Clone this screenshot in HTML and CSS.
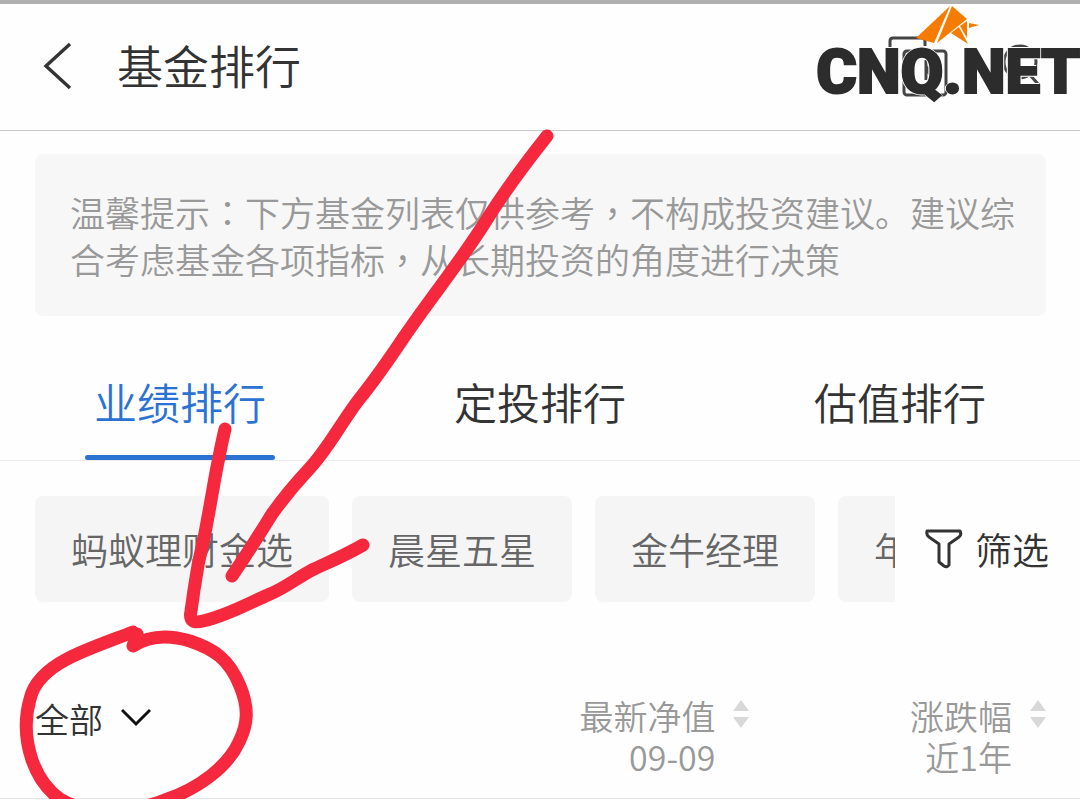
FILE: index.html
```
<!DOCTYPE html>
<html lang="zh-CN">
<head>
    <meta charset="UTF-8">
    <meta name="viewport" content="width=device-width, initial-scale=1.0">
    <title>基金排行</title>
    <link rel="stylesheet" href="styles.css">
</head>
<body>
    <header class="header">
        <a class="back" href="#" aria-label="返回">
            <svg width="30" height="48" viewBox="0 0 30 48"><path d="M27 2 L3 24 L27 46" fill="none" stroke="#333" stroke-width="3.4"/></svg>
        </a>
        <h1>基金排行</h1>
        <div class="actions">
            <button type="button" aria-label="收藏">
                <svg width="60" height="64" viewBox="0 0 60 64" fill="none" stroke="#444" stroke-width="3">
                    <path d="M2 34 V7 Q2 4 5 4 H34 Q37 4 37 7 V12"/>
                    <rect x="16" y="17" width="42" height="44" rx="3"/>
                    <path d="M38 26 V46 M46 26 L39 36 L46 46"/>
                </svg>
            </button>
            <button type="button" aria-label="搜索">
                <svg width="42" height="46" viewBox="0 0 42 46" fill="none" stroke="#444" stroke-width="3">
                    <circle cx="18" cy="19" r="16"/>
                    <path d="M27 31 L37 42"/>
                </svg>
            </button>
        </div>
        <div class="logo">
            <svg class="bird" width="64" height="42" viewBox="0 0 64 42" fill="#f57c00">
                <path d="M34 1 L0 33 L18 38 Z"/>
                <path d="M36 1 L51 14 L21 38 Z"/>
                <path d="M43 22 L35 28 L52 39 Z"/>
                <path d="M51 16 L44 21 L51 33 Z"/>
                <path d="M53 18 L63 20 L53 23 Z"/>
            </svg>
            <span>CNQ.NET</span>
        </div>
    </header>

    <p class="notice">温馨提示<span class="mid" lang="zh-TW">：</span>下方基金列表仅供参考<span class="mid" lang="zh-TW">，</span>不构成投资建议。建议综合考虑基金各项指标<span class="mid" lang="zh-TW">，</span>从长期投资的角度进行决策</p>

    <nav class="tabs">
        <a class="active" href="#">业绩排行</a>
        <a href="#">定投排行</a>
        <a href="#">估值排行</a>
    </nav>

    <div class="filters">
        <div class="chips">
            <button type="button">蚂蚁理财金选</button>
            <button type="button">晨星五星</button>
            <button type="button">金牛经理</button>
            <button type="button">年</button>
        </div>
        <button class="filter" type="button">
            <svg width="38" height="40" viewBox="0 0 38 40"><path d="M2 2 H35 Q37 6 34 8 L24 15 V36 Q22 39 19 37 L14 33 V15 L4 8 Q1 6 2 2 Z" fill="none" stroke="#333" stroke-width="3" stroke-linejoin="round"/></svg>
            筛选
        </button>
    </div>

    <table class="list">
        <thead>
            <tr>
                <th class="type">
                    <label>
                        <select aria-label="类型"><option>全部</option></select>
                        <svg width="30" height="20" viewBox="0 0 30 20"><path d="M1 2 L15 16 L29 2" fill="none" stroke="#111" stroke-width="3"/></svg>
                    </label>
                </th>
                <th class="value">
                    <button type="button">
                        <span>最新净值<br>09-09</span>
                        <svg width="18" height="30" viewBox="0 0 18 30" fill="#d8d8d8"><path d="M9 1 L17 12 H1 Z M1 18 H17 L9 29 Z"/></svg>
                    </button>
                </th>
                <th class="change">
                    <button type="button">
                        <span>涨跌幅<br>近1年</span>
                        <svg width="18" height="30" viewBox="0 0 18 30" fill="#d8d8d8"><path d="M9 1 L17 12 H1 Z M1 18 H17 L9 29 Z"/></svg>
                    </button>
                </th>
            </tr>
        </thead>
    </table>

    <!-- red pen marks over the page -->
    <svg class="marks" width="1080" height="800" viewBox="0 0 1080 800">
        <path d="M547 136 C520 170 502 195 484 224 C460 262 432 296 404 337 C388 361 374 381 357 402 C338 428 327 450 309 469 C293 486 282 500 272 514 C262 530 248 553 232 576"/>
        <path d="M225 429 C221 446 219 457 216 472 C211 500 208 518 204 538 C198 562 196 575 194 590 L191 611 Q188 625 203 621 C226 616 247 604 270 594 C285 588 297 578 312 570 C329 562 344 556 363 545"/>
        <path d="M133 632 C110 641 86 649 67 659 C50 668 34 681 30 699 C24 720 26 742 32 760 C38 777 47 790 60 799 C85 815 135 812 165 800 C200 788 228 766 239 742 C248 724 249 708 240 686 C229 659 214 649 190 641 C170 635 150 635 133 646 L137 634"/>
    </svg>
</body>
</html>
```
FILE: styles.css
```
* {
    box-sizing: border-box;
}
body {
    position: relative;
    margin: 0;
    border-top: 4px solid #b0b0b0;
    background: #fefefe;
    color: #333;
    font-family: "Noto Sans CJK SC", sans-serif;
    font-weight: 350;
}
button, select {
    padding: 0;
    border: none;
    background: none;
    color: inherit;
    font: inherit;
}
a {
    color: inherit;
    text-decoration: none;
}
svg {
    display: block;
    flex: none;
}
.header {
    position: relative;
    display: flex;
    align-items: center;
    height: 127px;
    padding: 0 36px 2px 43px;
    border-bottom: 1px solid #c8c8c8;
}
h1 {
    margin: 0 0 4px 44px;
    font-size: 46px;
    font-weight: 350;
    line-height: 60px;
}
.actions {
    display: flex;
    align-items: center;
    gap: 54px;
    margin-left: auto;
}
.logo {
    position: absolute;
    top: 0;
    right: 0;
    color: #2c2c2c;
    font-family: Roboto, sans-serif;
    font-size: 62px;
    font-weight: 900;
    line-height: 72px;
    padding-top: 32px;
    -webkit-text-stroke: 2px #2c2c2c;
    text-shadow: 2px 0 #fff, -2px 0 #fff, 0 2px #fff, 0 -2px #fff;
}
.bird {
    position: absolute;
    top: 1px;
    left: 100px;
}
.notice {
    margin: 23px 34px 0 35px;
    padding: 34px 30px 34px 35px;
    border-radius: 8px;
    background: #f7f7f7;
    color: #999;
    font-size: 35px;
    line-height: 47px;
}
.mid {
    font-family: "Noto Sans CJK TC", sans-serif;
}
.tabs {
    display: flex;
    margin-top: 54px;
    border-bottom: 1px solid #ececec;
}
.tabs a {
    position: relative;
    flex: 1;
    padding: 0 0 28px;
    font-size: 43px;
    line-height: 62px;
    text-align: center;
}
.tabs .active {
    color: #2b73d3;
}
.tabs .active::after {
    content: "";
    position: absolute;
    bottom: 0;
    left: 50%;
    width: 190px;
    height: 5px;
    margin-left: -95px;
    border-radius: 3px;
    background: #2b73d3;
}
.filters {
    display: flex;
    padding: 35px 31px 0 35px;
    font-size: 37px;
    line-height: 54px;
}
.chips {
    display: flex;
    flex: 1;
    gap: 23px;
    min-width: 0;
    overflow: hidden;
}
.chips button {
    flex: none;
    padding: 26px 36px;
    border-radius: 8px;
    background: #f5f5f5;
    color: #666;
}
.filter {
    display: flex;
    flex: none;
    align-items: center;
    gap: 12px;
    padding-left: 30px;
}
.list {
    width: 100%;
    margin-top: 85px;
    border-bottom: 1px solid #e6e6e6;
    border-collapse: collapse;
    table-layout: fixed;
    font-size: 34px;
    line-height: 41px;
}
.list th {
    padding: 8px 33px 21px 0;
    color: #999;
    font-weight: 350;
    vertical-align: top;
}
.list .type {
    width: 35%;
    padding-left: 35px;
    color: #333;
}
.type label {
    display: flex;
    align-items: center;
    gap: 18px;
}
.type select {
    appearance: none;
    height: 46px;
}
.list .value {
    width: 38%;
    padding-right: 38px;
}
.list th button {
    display: flex;
    gap: 17px;
    margin-left: auto;
    text-align: right;
}
.list th button svg {
    margin-top: 4px;
}
.marks {
    position: absolute;
    top: -4px;
    left: 0;
    fill: none;
    stroke: #f5283e;
    stroke-width: 13;
    stroke-linecap: round;
    stroke-linejoin: round;
    pointer-events: none;
}
```
